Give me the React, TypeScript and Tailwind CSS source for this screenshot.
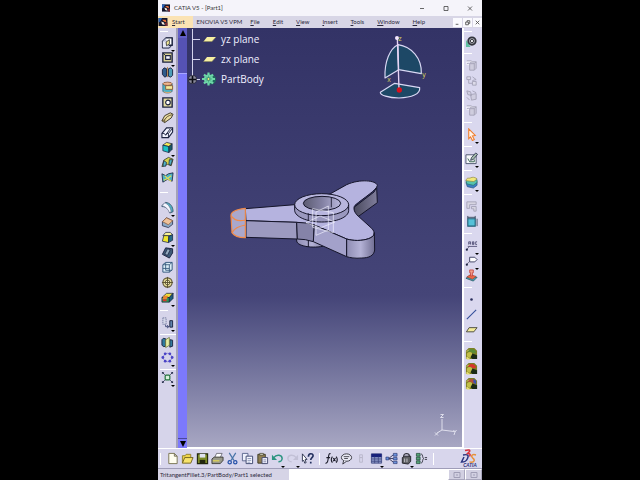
import type { ReactNode } from "react";
import clsx from "clsx";

type Tool = {
  name: string;
  art: ReactNode;
  menu?: boolean;
  disabled?: boolean;
};

const navy = "#1c2340";
const sand = "#f3eb9a";
const teal = "#4fb3c4";

/* ---------- icon drawings, all on a 14x14 grid ---------- */

const cube = (front: string, top: string, side: string) => (
  <>
    <path d="M2 4.500L6 1.500l6 1.500-3.500 3z" fill={top} stroke={navy} strokeWidth=".8" />
    <path d="M2 4.500L8.500 6v6.500L2 10.500z" fill={front} stroke={navy} strokeWidth=".8" />
    <path d="M8.500 6L12 3v6l-3.500 3.500z" fill={side} stroke={navy} strokeWidth=".8" />
  </>
);

const ghost = (
  <>
    <path d="M2 3h7M2 3v3h6" stroke="#fff" fill="none" />
    <path d="M5 5l2-2h5v7l-2 2H5z" fill="#cfcdde" stroke="#a5a3b8" />
    <path d="M5 5h5v7M10 5l2-2M2 2h5M2 5h2" stroke="#a5a3b8" fill="none" />
  </>
);

const sphere = (accent: string) => (
  <>
    <path d="M1 4l3-3h6l3 3v9H1z" fill="#7d7f24" />
    <path d="M3 5c1-4 8-4 9 1l-3 1-3-2z" fill={accent} />
    <circle cx="5" cy="8.500" r="3" fill="#c3bf48" />
    <path d="M8 7l5 2v4H8l-2-2z" fill="#1b2a17" />
    <path d="M2 11l3 2H2zM2 5l2-2" fill="#e6df74" stroke="#e6df74" />
  </>
);

const leftGroups: Tool[][] = [
  [
    {
      name: "Pad",
      menu: true,
      art: (
        <>
          <path d="M1.500 5.500L5 2h7v7.500L9 13H1.500z" fill="#b9bddb" stroke={navy} />
          <path d="M5 2h7v8H8" fill="#fff" stroke={navy} strokeWidth="1.500" />
          <path d="M2 6h6v6H2z" fill="#e8e9f6" />
          <path d="M5.500 6.500L9 4v4.500l-3 2z" fill={sand} stroke="#333" strokeWidth=".9" />
        </>
      ),
    },
    {
      name: "Pocket",
      menu: true,
      art: (
        <>
          <path d="M2 2h10v10H2z" fill="#d9d294" stroke={navy} strokeWidth="1.500" />
          <path d="M5 5h5v4H5z" fill="#f8f8ff" stroke={navy} strokeWidth="1.200" />
          <path d="M2 2l3 3" stroke={navy} />
        </>
      ),
    },
    {
      name: "Shaft",
      art: (
        <>
          <path d="M1.500 4l2-2 2.500 1v8l-2 1-2.500-3z" fill="#2f5c8c" stroke={navy} />
          <path d="M8 3l2.500-1 2 2v6l-2 2L8 11z" fill="#4c9db8" stroke={navy} />
          <path d="M7 1v11" stroke="#b1854e" />
        </>
      ),
    },
    {
      name: "Groove",
      art: (
        <>
          <path d="M2 3v8c1 2.500 9 2.500 10 0V3z" fill={teal} stroke="#2a6475" strokeWidth=".8" />
          <path d="M5 5h7.500v4H5z" fill={sand} stroke="#8a5c3a" />
          <ellipse cx="7" cy="3" rx="5" ry="1.800" fill="#eeb58c" stroke="#7a4a32" strokeWidth=".8" />
          <path d="M3 11.500c2 1.500 6 1.500 8 0" fill="none" stroke="#e9a869" strokeWidth="1.200" />
        </>
      ),
    },
    {
      name: "Hole",
      art: (
        <>
          <path d="M2 2h10v10H2z" fill="#e4dda2" stroke={navy} strokeWidth="1.500" />
          <circle cx="7.500" cy="7" r="2.500" fill="#fff" stroke={navy} strokeWidth="1.200" />
        </>
      ),
    },
    {
      name: "Rib",
      art: (
        <>
          <path d="M1 10.500l3-5.500 6-3 3 1.500-2 4L4 12.500z" fill="#eadca0" stroke="#3a3524" />
          <path d="M4 9.500C6 6 8 5 12 4M1 10.500l3-1v3" fill="none" stroke="#5b4f30" />
        </>
      ),
    },
    {
      name: "Slot",
      art: (
        <>
          <path d="M1 8l5-6h6.500v4.500L8 12.500H1z" fill="#f2f4ff" stroke={navy} strokeWidth="1.200" />
          <path d="M1 8h2.500l1.500 2 1.500-2H8v4.500M8 8l4.500-5.500M5 9.500L10 3" fill="none" stroke={navy} />
        </>
      ),
    },
    { name: "Stiffener", menu: true, art: cube("#18c2c4", "#f4ea57", "#195b68") },
    {
      name: "Multi-sections solid",
      art: (
        <>
          <path d="M1 11.500l2-7L8 1.500l5 2-2 7-4-1.500z" fill="#d6d24b" stroke="#3c4424" strokeWidth=".9" />
          <path d="M3 5l3 2-1 4-3 0zM9 4l3.500 0-2 6-2-1z" fill={teal} stroke={navy} strokeWidth=".8" />
        </>
      ),
    },
    {
      name: "Removed multi-sections solid",
      art: (
        <>
          <path d="M1 3l4 2 3-2 5-1-1 9-5-2-5 3z" fill={teal} stroke={navy} strokeWidth=".9" />
          <path d="M4 5l3 3 4-3M3 10l4-2 4 3" fill="none" stroke="#e0dd55" strokeWidth="1.300" />
        </>
      ),
    },
  ],
  [
    {
      name: "Edge fillet",
      menu: true,
      art: (
        <>
          <path d="M1 5l4-3.500c5 .5 8 4.500 8 10L9.500 13C9 9 6 6 1 6z" fill={teal} stroke="#3c5970" />
          <path d="M1 5l3-3c3 1 6 4 7 9.500l-2 1C8 9 5 6 1 5z" fill="#f5f7ff" stroke="#5b6484" strokeWidth=".7" />
        </>
      ),
    },
    {
      name: "Chamfer",
      art: (
        <>
          <path d="M1.500 6L6 2l6.500 3v4L8 12.500l-6.500-2z" fill="#8ba9c6" stroke={navy} strokeWidth=".8" />
          <path d="M1.500 6L6 2l6.500 3L8 9.500z" fill="#efc29a" stroke="#8c5b36" strokeWidth=".8" />
        </>
      ),
    },
    {
      name: "Draft angle",
      menu: true,
      art: (
        <>
          <path d="M2 5l3-3.500 5 0 2.500 2.500-4 1.500z" fill="#f6f194" stroke={navy} strokeWidth=".8" />
          <path d="M3 5h5.500l-.5 7.500-6.500-1.500z" fill="#eee52d" stroke={navy} strokeWidth=".8" />
          <path d="M8.500 5.500l4-1.500v6L8 12.500z" fill="#246b86" stroke={navy} strokeWidth=".8" />
        </>
      ),
    },
    {
      name: "Shell",
      art: (
        <>
          <path d="M1.500 9l3.500-7 7.500 1v4.500L9 13z" fill="#3e5b79" stroke={navy} />
          <path d="M4 9l3-6 3 1-3 6z" fill="#93abc0" stroke={navy} strokeWidth=".8" />
        </>
      ),
    },
    {
      name: "Thickness",
      art: (
        <>
          <path d="M2 4l3-2.500h7v8L9 12H2z" fill="#d9ecf6" stroke="#31557a" />
          <path d="M2 4h7v8M9 4l3-2.500M5 2v8h7M2 8h7" fill="none" stroke="#31557a" strokeWidth=".9" />
        </>
      ),
    },
    {
      name: "Thread",
      art: (
        <>
          <circle cx="7" cy="7" r="5" fill="#e0d795" stroke="#5a5230" strokeWidth="1.200" />
          <circle cx="7" cy="7" r="2.500" fill="#f2ebb8" stroke="#5a5230" strokeWidth=".9" />
          <path d="M7 1v12M1 7h12" stroke="#5a5230" />
        </>
      ),
    },
    {
      name: "Remove face",
      menu: true,
      art: (
        <>
          <path d="M1 7l5-4.500h7L9 7z" fill="#efe13a" stroke={navy} strokeWidth=".8" />
          <path d="M1 7h8v5H1z" fill="#2e9a58" stroke={navy} strokeWidth=".8" />
          <path d="M9 7l4-4.500V8l-4 4z" fill="#1c5e7c" stroke={navy} strokeWidth=".8" />
          <path d="M3 5h5L6 9H1.500z" fill="#e8862c" />
          <path d="M2 9h4v2H2z" fill="#d9362c" />
        </>
      ),
    },
  ],
  [
    {
      name: "Translation",
      menu: true,
      art: (
        <>
          <path d="M2 2h3.500v7H2z" fill="#d3d6e8" stroke="#7a80a4" strokeDasharray="1.500 .7" />
          <path d="M9.500 5h3v7h-3z" fill="#5f83ae" stroke={navy} />
          <path d="M5 9.500v2h3M6.500 10l2 1.500L6.500 13" fill="none" stroke="#3f4878" />
        </>
      ),
    },
  ],
  [
    {
      name: "Mirror",
      art: (
        <>
          <path d="M1 4l1.500-1.500L5 3v8l-2 .5L1 10zM9.500 4l3 .5V11l-3 1z" fill="#2f7a9c" stroke={navy} />
          <path d="M5 4l4-2.500V10l-4 2.500z" fill="#e6eda2" stroke="#687339" strokeWidth=".8" />
        </>
      ),
    },
    {
      name: "Rectangular pattern",
      menu: true,
      art: (
        <>
          <circle cx="7" cy="7" r="4.500" stroke="#6c66cc" strokeWidth=".7" />
          <g fill="#4a43c6">
            <circle cx="4.500" cy="3" r="1.500" />
            <circle cx="9.500" cy="3" r="1.500" />
            <circle cx="2" cy="7" r="1.500" />
            <circle cx="12" cy="7" r="1.500" />
            <circle cx="4.500" cy="11" r="1.500" />
            <circle cx="9.500" cy="11" r="1.500" />
          </g>
        </>
      ),
    },
  ],
  [
    {
      name: "Scaling",
      menu: true,
      art: (
        <>
          <path d="M2 2l2 2M12 2l-2 2M2 12l2-2M12 12l-2-2" stroke="#2c3350" />
          <path d="M1 1h2.500L1 3.500zM13 1v2.500L10.500 1zM1 13v-2.500L3.500 13zM13 13h-2.500l2.500-2.500z" fill="#2c3350" />
          <rect x="4.500" y="4.500" width="5" height="5" rx="1" fill="#d8f1dc" stroke="#24733d" strokeWidth="1.300" />
        </>
      ),
    },
  ],
];

const rightGroups: Tool[][] = [
  [
    {
      name: "Part Design",
      art: (
        <>
          <path d="M1 5l5 8-5 0z" fill="#5fbf9f" />
          <circle cx="7.500" cy="6.500" r="4" fill="#b9bac4" stroke="#33353d" strokeWidth="2" />
          <circle cx="7.500" cy="6.500" r="1.800" fill="#e8e8ee" stroke="#2b2d33" />
        </>
      ),
    },
  ],
  [
    { name: "Copy view", disabled: true, art: ghost },
    {
      name: "Link view",
      disabled: true,
      art: (
        <>
          <path d="M2 3h4v3H2zM8 8h4v4H8z" fill="#dddbe9" stroke="#a5a3b8" />
          <path d="M4 6v4h4M8 3l4 3-4 1" fill="none" stroke="#a5a3b8" />
        </>
      ),
    },
    {
      name: "Cut view",
      disabled: true,
      art: (
        <>
          <path d="M2 2l4 1 1 4-4-1zM6 6l6-1v6l-5 1z" fill="#cfcddf" stroke="#a5a3b8" />
          <path d="M2 9l3 3M8 2l4 2" stroke="#a5a3b8" />
        </>
      ),
    },
    { name: "Paste view", disabled: true, art: ghost },
  ],
  [
    {
      name: "Select",
      menu: true,
      art: (
        <path d="M4 1l7 7-3 .5 2 4-2 1-2-4-2 2z" fill="#fff3e9" stroke="#f08030" strokeWidth="1.200" />
      ),
    },
  ],
  [
    {
      name: "Sketch",
      menu: true,
      art: (
        <>
          <path d="M1 3h11v9.500H1z" fill="#f6f7fb" stroke="#4c556e" />
          <path d="M6 9l1-3 4.500-5 2 1.500L9 8z" fill="#a4bcab" stroke={navy} strokeWidth=".8" />
          <path d="M3 7l2 3.500 5 0V8" fill="none" stroke="#31614a" />
        </>
      ),
    },
  ],
  [
    {
      name: "Sketcher with positioning",
      menu: true,
      art: (
        <>
          <path d="M1 7l1.500 4.500L9 13l4-3V6z" fill="#3d7fc4" stroke="#24507a" strokeWidth=".7" />
          <path d="M1 5l1 3.500L9 10l4-3V4z" fill="#56c3ae" stroke="#276e66" strokeWidth=".7" />
          <path d="M1 5c1-4 3-2 5-3s4-1 7 1c-1 1-3 3-4 3z" fill="#f1e87a" stroke="#8c8440" strokeWidth=".7" />
        </>
      ),
    },
  ],
  [
    {
      name: "Catalog",
      disabled: true,
      art: <path d="M2 2h10v3H5v4H2zM7 7h5v5H9.500V9.500H7z" fill="#d7d5e2" stroke="#a5a3b8" />,
    },
    {
      name: "Measure",
      art: (
        <>
          <path d="M3 4h8v8H3z" fill="#55c1d8" stroke="#1f5d74" strokeWidth="1.200" />
          <path d="M3 1v3M11 1v3M3 2.500h8M13 4v8" stroke="#2b3e52" strokeWidth=".9" />
        </>
      ),
    },
  ],
  [
    {
      name: "Text with leader",
      menu: true,
      art: (
        <>
          <path d="M4 6V3h2v3M4 4.500h2M8 6V3h1.500v3H8M8 4.500h2M13 3h-1.500v3H13M3 8h10" fill="none" stroke="#4e4c74" strokeWidth=".9" />
          <path d="M5 8l-3 3" stroke="#5a5872" strokeWidth=".8" />
          <circle cx="2" cy="11.500" r="1.200" fill={navy} />
        </>
      ),
    },
    {
      name: "Flag note",
      menu: true,
      art: (
        <>
          <path d="M5 3.500h5.500L13 6l-2.500 2.500H5z" fill="#fff" stroke="#3a3d60" />
          <path d="M5 8l-3 3" stroke="#5a5872" strokeWidth=".8" />
          <circle cx="2" cy="11.500" r="1.200" fill={navy} />
        </>
      ),
    },
    {
      name: "Apply material",
      art: (
        <>
          <path d="M1 10l4-3 8 2-4 4z" fill="#3fa3b5" stroke="#24525f" strokeWidth=".8" />
          <path d="M2 8.500l4-2.500 6 2-4 3z" fill="#ea6a4a" stroke="#9c3b2c" strokeWidth=".6" />
          <path d="M5 1h4v3H8v3.500H6V4H5z" fill="#f2a08c" stroke="#c43a34" strokeWidth=".8" />
        </>
      ),
    },
  ],
  [
    { name: "Point", art: <circle cx="7" cy="7" r="1.400" fill="#2b2f5c" /> },
    { name: "Line", art: <path d="M2 12L12 2" stroke="#34509a" strokeWidth="1.200" /> },
    {
      name: "Plane",
      art: <path d="M1.500 9.500L4.500 5H13l-3.500 4.500z" fill={sand} stroke="#4a4a3a" />,
    },
  ],
  [
    { name: "Assemble", art: sphere("#5c8c34") },
    { name: "Add", art: sphere("#d8352c") },
    {
      name: "Remove",
      art: (
        <>
          {sphere("#b5503a")}
          <path d="M9 2l3 2v4L9 6z" fill="#3c52b0" />
        </>
      ),
    },
  ],
];

const fileTools: Tool[] = [
  {
    name: "New",
    art: <path d="M3 1.500h6l3 3v8H3zM9 1.500v3h3" fill="#fffef0" stroke="#77724f" />,
  },
  {
    name: "Open",
    art: (
      <>
        <path d="M1.500 12V4h3l1-1.500h5V6" fill="#f0d64a" stroke="#8f7f2c" />
        <path d="M1.500 12L4 6h9l-2.500 6z" fill="#f7e36b" stroke="#6f6120" />
      </>
    ),
  },
  {
    name: "Save",
    art: (
      <>
        <path d="M1.500 2h11v10.500h-11z" fill="#7b8a28" stroke="#22260e" strokeWidth="1.200" />
        <path d="M4 2h6v4H4z" fill="#dfe2f0" />
        <path d="M4 8.500h6v4H4z" fill="#22260e" />
      </>
    ),
  },
  {
    name: "Print",
    art: (
      <>
        <path d="M4 6l2-4.500h6L10 6z" fill="#fff" stroke="#55555f" strokeWidth=".8" />
        <path d="M1 7.500L3.500 5.500H13V9l-3 3.500H1z" fill="#9a9a8c" stroke="#33332c" strokeWidth=".9" />
        <path d="M2 9.500h7" stroke="#e4d850" strokeWidth="1.300" />
      </>
    ),
  },
  {
    name: "Cut",
    art: (
      <>
        <path d="M3.500 1l5 8M10.500 1l-5 8" stroke="#4a76a8" strokeWidth="1.300" />
        <circle cx="4" cy="11" r="1.800" fill="none" stroke="#2450a8" strokeWidth="1.300" />
        <circle cx="10" cy="11" r="1.800" fill="none" stroke="#2450a8" strokeWidth="1.300" />
      </>
    ),
  },
  {
    name: "Copy",
    art: (
      <>
        <path d="M1.500 1.500h6v8h-6z" fill="#eef0fb" stroke="#5a648c" />
        <path d="M5.500 4.500h7v8h-7z" fill="#f7f8ff" stroke="#3c466e" />
        <path d="M7 7h4M7 9h4M7 11h3" stroke="#7480a8" strokeWidth=".8" />
      </>
    ),
  },
  {
    name: "Paste",
    art: (
      <>
        <path d="M2 2.500h8V12H2z" fill="#8f7e52" stroke="#3d3823" />
        <path d="M4 1.500h4v2H4z" fill="#d8d5c6" stroke="#3d3823" strokeWidth=".7" />
        <path d="M6.500 6h6v6.500h-6z" fill="#f1f2ff" stroke="#434a6e" />
        <path d="M8 8.500h3M8 10.500h3" stroke="#6a6f90" strokeWidth=".8" />
      </>
    ),
  },
  {
    name: "Undo",
    menu: true,
    art: (
      <>
        <path d="M3 6c3-4 9-3 9 1 0 2-2 3.500-4 3.500" fill="none" stroke="#2c9480" strokeWidth="1.600" />
        <path d="M1 3v5.500h5.500z" fill="#2c9480" />
      </>
    ),
  },
  {
    name: "Redo",
    menu: true,
    disabled: true,
    art: (
      <>
        <path d="M11 6C8 2 2 3 2 7c0 2 2 3.500 4 3.500" fill="none" stroke="#c2c0d6" strokeWidth="1.500" />
        <path d="M13 3v5.500H7.500z" fill="#c2c0d6" />
      </>
    ),
  },
  {
    name: "What's this?",
    art: (
      <>
        <path d="M1.500 2l5 6H4.500l1 3.500-1.500.5L3 9 1.500 10z" fill="#fff" stroke={navy} strokeWidth=".9" />
        <path d="M8 5c0-4 5-4 5-1 0 2-2.500 2-2.500 4.500M10.500 10.500v2" fill="none" stroke="#23305e" strokeWidth="1.800" />
      </>
    ),
  },
];

const knowledgeTools: Tool[] = [
  {
    name: "Formula",
    art: (
      <g fill="none" stroke="#1d1d2b" strokeWidth="1.200">
        <path d="M6 2C4 1 4 4 3.500 7S2.500 12.500.5 12M1.500 6h4" />
        <path d="M8 5c-1.500 2-1.500 4.500 0 6.500M12 5c1.500 2 1.500 4.500 0 6.500M8.800 6.500l2.500 3.500M11.300 6.500L8.800 10" />
      </g>
    ),
  },
  {
    name: "Comment",
    art: (
      <>
        <ellipse cx="7" cy="6" rx="5.500" ry="4" fill="#e9e9f4" stroke="#34343f" />
        <path d="M4 9l-1 4 4-3" fill="#e9e9f4" stroke="#34343f" />
        <path d="M4 5h6M4.500 7h4" stroke="#34343f" strokeWidth=".9" />
      </>
    ),
  },
  {
    name: "Lock",
    disabled: true,
    art: <path d="M5 3h3v3H5zM5 6h3v5H5z" fill="none" stroke="#b9b7ca" />,
  },
  {
    name: "Design table",
    menu: true,
    art: (
      <>
        <path d="M1.500 2h11v10h-11z" fill="#8a97c6" stroke="#4a5288" />
        <path d="M1.500 2h11v3.500h-11z" fill="#16207a" />
        <path d="M1.500 7.500h11M1.500 10h11M5 5v7M9 5v7" stroke="#3c447e" strokeWidth=".8" />
      </>
    ),
  },
  {
    name: "Relations",
    art: (
      <>
        <path d="M4 7l5-4M4 7h5M4 7l5 4" stroke="#3a3d60" />
        <path d="M1 5.500h3v3H1zM9 1.500h4v3H9zM9 6h4v2.500H9zM9 10h4v2.500H9z" fill="#6c93dc" stroke="#26336e" strokeWidth=".7" />
      </>
    ),
  },
  {
    name: "Parameters lock",
    menu: true,
    art: (
      <>
        <path d="M4 6V4c0-3 6-3 6 0v2" fill="none" stroke="#30303a" strokeWidth="1.300" />
        <path d="M2.500 6L5 4.500h6.500V10l-2.500 3-6.500-1z" fill="#5d5e62" stroke="#22222a" />
        <path d="M5 7v4M7.500 7v4" stroke="#c9c9d0" />
      </>
    ),
  },
  {
    name: "Equivalent dimensions",
    art: (
      <>
        <path d="M1.500 1.500h4v3h-4zM1.500 5.500h4v3h-4zM1.500 9.500h4v3h-4z" fill="#56a578" stroke="#234a39" strokeWidth=".8" />
        <path d="M6.500 2c2.500 0 1 5 3 5-2 0-.5 5-3 5M10.500 6H13M10.500 8H13" fill="none" stroke="#3b3b4a" />
      </>
    ),
  },
];

const menus = ["File", "Edit", "View", "Insert", "Tools", "Window", "Help"];

/* ---------- small parts ---------- */

const ToolButton = ({ tool }: { tool: Tool }) => (
  <button
    type="button"
    aria-label={tool.name}
    disabled={tool.disabled}
    className="relative flex size-[15px] shrink-0 items-center justify-center"
  >
    <svg viewBox="0 0 14 14" className="size-[13px]" fill="none">
      {tool.art}
    </svg>
    {tool.menu && (
      <svg viewBox="0 0 4 2" className="absolute right-0 -bottom-0.5 h-0.5 w-1">
        <path d="M0 0h4L2 2z" fill="#000" />
      </svg>
    )}
  </button>
);

const Grip = () => <div className="h-px w-2 bg-white" />;

const AppIcon = ({ className }: { className?: string }) => (
  <svg viewBox="0 0 10 9" className={className}>
    <path d="M0 0h10v9H0z" fill="#14162c" />
    <path d="M0 0h4L2 4 0 5z" fill="#2a63b8" />
    <path d="M4 2l4 0 1 3-3-1z" fill="#e8713a" />
    <path d="M3 4l3 1 1 3-3-1z" fill="#f4e9dc" />
    <path d="M7 6l3-1v4H8z" fill="#7c2c34" />
  </svg>
);

const TitleBar = () => (
  <header className="flex h-4 shrink-0 items-center bg-[#f5f4fa] pl-1 text-[#333]">
    <AppIcon className="h-2 w-2" />
    <h1 className="ml-1 flex-1 text-[6px] leading-none">CATIA V5 - [Part1]</h1>
    <div className="flex gap-3 pr-1.5">
      {[
        { name: "Minimize", d: "M3 6.500h4" },
        { name: "Maximize", d: "M3 4.500h4v4H3z" },
        { name: "Close", d: "M3 4.500l4 4M7 4.500l-4 4" },
      ].map((b) => (
        <button key={b.name} type="button" aria-label={b.name} className="h-3 w-3">
          <svg viewBox="0 0 10 12" className="h-3 w-3" fill="none" stroke="#444" strokeWidth=".8">
            <path d={b.d} />
          </svg>
        </button>
      ))}
    </div>
  </header>
);

const MenuBar = () => (
  <nav className="flex h-3 shrink-0 items-center bg-[#d8d6e6] text-[6px] leading-none text-[#2c2a3c]">
    <button type="button" className="flex h-full items-center gap-1 bg-[#fbe3b4] pr-2">
      <AppIcon className="h-2 w-2.5" />
      <span>
        <u>S</u>tart
      </span>
    </button>
    <button type="button" className="mr-2 ml-1 whitespace-nowrap">
      ENOVIA V5 VPM
    </button>
    <div className="flex flex-1 gap-[13px]">
      {menus.map((m) => (
        <button key={m} type="button" className="whitespace-nowrap">
          <u>{m[0]}</u>
          {m.slice(1)}
        </button>
      ))}
    </div>
    <div className="flex gap-px">
      {[
        { name: "Minimize document", d: "M3 7h3" },
        { name: "Restore document", d: "M3 4.500h3v3H3zM4.500 4.500V3h3v3H6" },
        { name: "Close document", d: "M3 3l4 4M7 3L3 7" },
      ].map((b) => (
        <button key={b.name} type="button" aria-label={b.name} className="size-[9px] bg-[#fafafe]">
          <svg viewBox="0 0 10 10" className="size-[9px]" fill="none" stroke="#555">
            <path d={b.d} />
          </svg>
        </button>
      ))}
    </div>
  </nav>
);

const Scrollbar = () => (
  <div className="flex w-[9px] shrink-0 flex-col bg-[#5552b4]">
    <button type="button" aria-label="Scroll up" className="flex h-[10px] items-center justify-center bg-[#615ec8]">
      <svg viewBox="0 0 6 6" className="size-1.5">
        <path d="M3 0l3 6H0z" />
      </svg>
    </button>
    <div className="mt-[35px] flex-1 border-t border-[#a9a7ff] bg-[#7c79fc]" />
    <button
      type="button"
      aria-label="Scroll down"
      className="flex h-[10px] items-center justify-center border-t border-[#4a47a0] bg-[#7c79fc]"
    >
      <svg viewBox="0 0 6 6" className="size-1.5">
        <path d="M3 6L0 0h6z" />
      </svg>
    </button>
  </div>
);

const PlaneIcon = () => (
  <svg viewBox="0 0 14 14" className="size-3.5">
    <path d="M1.500 9.500L5 5h9l-4 4.500z" fill="#f6efa2" />
    <path d="M1.500 9.500H10L14 5" fill="none" stroke="#8d8a5c" strokeWidth=".6" />
  </svg>
);

const BodyIcon = () => (
  <svg viewBox="0 0 14 14" className="size-3.5">
    <circle cx="9" cy="7.500" r="5" fill="#1e6a5c" />
    <g stroke="#6fd8a8" strokeWidth="2.200">
      <path d="M6.500 .5v13M0 7h13M2 2.500l9 9M11 2.500l-9 9" />
    </g>
    <circle cx="6.500" cy="7" r="4.600" fill="#6fd8a8" />
    <path d="M6.500 3.500v7M3 7h7M4 4.500l5 5M9 4.500l-5 5" stroke="#34907a" strokeWidth=".6" />
    <circle cx="6.500" cy="7" r="1.500" fill="#e6ee7c" stroke="#2c8068" strokeWidth=".8" />
  </svg>
);

const SpecTree = () => (
  <ul className="relative pt-px font-['Open_Sans',sans-serif] text-[10px] leading-none text-[#f0f0ff]">
    {["yz plane", "zx plane", "PartBody"].map((label) => {
      const body = label === "PartBody";
      return (
        <li key={label} className="flex h-5 items-center pl-[5px]">
          <div className="relative h-5 w-2.5 shrink-0">
            <div className={clsx("w-px bg-[#d4d4ec]", body ? "h-2.5" : "h-5")} />
            <div className="absolute top-2.5 left-0 h-px w-2 bg-[#d4d4ec]" />
            {body && (
              <svg viewBox="0 0 10 10" className="absolute top-1.5 -left-1 size-[9px]">
                <circle cx="5" cy="5" r="4.500" fill="#8a8a9c" stroke="#23232f" strokeWidth=".8" />
                <path d="M5 1v8M1 5h8" stroke="#0c0c14" strokeWidth="1.800" />
              </svg>
            )}
          </div>
          {body ? <BodyIcon /> : <PlaneIcon />}
          <span className="ml-[5px]">{label}</span>
        </li>
      );
    })}
  </ul>
);

const Compass = () => (
  <svg viewBox="171 99 150 201" className="absolute top-[5px] right-[35px] h-[67px] w-[50px]">
    <g fill="#1d4866" stroke="#dad8f4" strokeWidth="3.500" strokeLinejoin="round">
      <path d="M234 134C210 145 193 185 195 234L236 209z" />
      <path d="M234 134C275 140 306 175 304 221L236 209z" />
      <path d="M224 250L299 263C302 282 275 293 237 294 205 294 180 285 181 277z" />
    </g>
    <path d="M232 114L237 268" stroke="#e8d4f4" strokeWidth="4" />
    <circle cx="231" cy="114" r="6" fill="#f4e8ff" />
    <circle cx="238" cy="270" r="8" fill="#d8101c" />
    <g fill="#d0cc5c" fontFamily="Liberation Sans" fontSize="21">
      <text x="235" y="122">z</text>
      <text x="202" y="246">x</text>
      <text x="307" y="231">y</text>
    </g>
  </svg>
);

const Part = () => (
  <svg viewBox="0 0 510 300" className="absolute top-[142px] left-[33px] h-[100px] w-[170px]">
    <defs>
      <linearGradient id="cap">
        <stop offset="0" stopColor="#8f8db4" />
        <stop offset=".5" stopColor="#b4b2d6" />
        <stop offset="1" stopColor="#706e92" />
      </linearGradient>
      <linearGradient id="bore">
        <stop offset="0" stopColor="#5c5c72" />
        <stop offset=".5" stopColor="#8280a2" />
        <stop offset="1" stopColor="#b9b7dc" />
      </linearGradient>
      <linearGradient id="notch">
        <stop offset="0" stopColor="#4a4a5e" />
        <stop offset="1" stopColor="#807e9c" />
      </linearGradient>
    </defs>
    <g stroke="#15152a" strokeWidth="3" strokeLinejoin="round">
      <path d="M230 195v18c2 18 60 24 92 12l-10-30z" fill="url(#cap)" />
      <path d="M265 205v26" fill="none" />
      <path d="M402 112L462 66 470 52 472 98 410 143 402 128z" fill="url(#notch)" />
      <path
        d="M76 116L225 104 330 72 380 44C420 26 468 31 472 46 471 60 430 84 405 106 399 113 402 124 410 134L455 175C468 188 463 200 446 206 425 213 400 213 380 207L283 165 230 157 78 152z"
        fill="#b5b3df"
      />
      <path d="M78 152L230 157 232 207 78 202z" fill="#9c9ac0" />
      <path d="M230 157Q260 157 283 165L280 215Q256 207 232 207z" fill="#8583a8" />
      <path d="M283 165L380 207V260L280 215z" fill="#a3a1ca" />
      <path d="M380 207C400 213 425 213 446 206 458 201 463 196 463 188L464 240C462 258 445 264 425 264 405 266 390 263 380 260z" fill="url(#cap)" />
      <path d="M224 104v18c2 18 36 34 81 34s80-14 81-34v-18z" fill="#9a98be" />
      <ellipse cx="305" cy="104" rx="81" ry="33" fill="#b8b6de" />
      <ellipse cx="306" cy="100" rx="56" ry="21" fill="url(#bore)" />
      <path d="M265 130v24M334 84v28" fill="none" strokeWidth="2.500" />
    </g>
    <g fill="none" stroke="#f2f2ff" strokeWidth="2">
      <path d="M278 116L340 128V188L278 172z" />
      <path d="M288 126L325 108V180L288 196z" />
      <path d="M258 158L300 138 345 156 300 174z" />
    </g>
    <g fill="none" stroke="#f08a4a" strokeWidth="3.500" strokeLinejoin="round">
      <path d="M76 115C50 118 32 126 33 137L36 188C42 198 55 203 76 203z" fill="#aaa8cc" />
      <path d="M33 137C42 152 60 154 77 150M36 188C42 176 58 168 77 165" />
    </g>
  </svg>
);

const AxisTriad = () => (
  <svg
    viewBox="0 0 24 24"
    className="absolute right-1 bottom-2.5 size-6"
    fill="none"
    stroke="#e6e6f2"
    strokeWidth=".9"
  >
    <path d="M8 17V6M8 17l-5 3M8 17l12 1.500" />
    <path d="M6.500 1.500h3l-3 3h3M1 19.500l3 3M4 19.500l-3 3M19.500 17l1.500 2 1.500-2M21 19l-1 3" />
  </svg>
);

const Viewport = () => (
  <main className="relative min-w-0 flex-1 overflow-hidden border-b border-white bg-linear-to-b from-[#333366] from-0% via-[#454578] via-64% to-[#a8a7c3]">
    <SpecTree />
    <Compass />
    <Part />
    <AxisTriad />
  </main>
);

const CatiaLogo = () => (
  <div className="flex w-6 shrink-0 flex-col items-center pb-px">
    <svg viewBox="0 0 22 14" className="h-3.5 w-[22px]" fill="none" strokeWidth="1.500">
      <path d="M4 6c5-1 6 0 4.500 3.500S5 13 2.500 13L5 8" stroke="#2a3580" />
      <path d="M6 1.500c4-1 5.500-.5 4.500 1L8.500 4.500c3 0 3 1 2 3" stroke="#d8323a" />
      <path d="M17 6c-3-1-5 0-4 2s3 2 2 4-3 1-4.500 1" stroke="#e89038" />
    </svg>
    <span className="text-[5px] leading-[4px] font-bold text-[#2a2f78] italic">CATIA</span>
  </div>
);

const App = () => {
  return (
    <div className="flex h-screen justify-center bg-black font-[Lato,sans-serif]">
      <div className="flex aspect-[27/40] h-full flex-col overflow-hidden bg-[#d6d4ec]">
        <TitleBar />
        <MenuBar />
        <div className="flex min-h-0 flex-1">
          <aside className="flex w-5 shrink-0 flex-col border-r-2 border-[#a3a1b8] bg-[#d6d4ea] pt-[3px] pl-0.5">
            <Grip />
            <div className="h-[3px]" />
            {leftGroups.map((group, i) => (
              <div key={i} className={clsx("flex flex-col", i > 2 && "mt-1 border-t border-white")}>
                {(i === 1 || i === 2) && (
                  <div className={clsx("flex items-center", i === 1 ? "h-[15px]" : "h-2.5")}>
                    <Grip />
                  </div>
                )}
                {group.map((tool) => (
                  <ToolButton key={tool.name} tool={tool} />
                ))}
              </div>
            ))}
          </aside>
          <Scrollbar />
          <Viewport />
          <aside className="flex w-5 shrink-0 flex-col border-l-2 border-white bg-[#dad8ef]">
            {rightGroups.map((group, i) => (
              <div key={i} className="flex flex-col">
                <div className={clsx("flex items-center", i === 0 ? "h-1.5" : "h-[9px]")}>
                  <Grip />
                </div>
                {group.map((tool) => (
                  <ToolButton key={tool.name} tool={tool} />
                ))}
              </div>
            ))}
          </aside>
        </div>
        <div className="flex h-5 shrink-0 items-center border-t border-white bg-[#d8d6ec] pl-0.5">
          <div className="mr-1 h-3 w-px bg-white" />
          {fileTools.map((tool) => (
            <ToolButton key={tool.name} tool={tool} />
          ))}
          <div className="mx-1 h-3 w-px bg-white" />
          {knowledgeTools.map((tool) => (
            <ToolButton key={tool.name} tool={tool} />
          ))}
          <div className="ml-1 h-3 w-px bg-white" />
          <div className="flex-1" />
          <CatiaLogo />
        </div>
        <footer className="flex h-3 shrink-0 items-center border-t border-[#9f9db8] bg-[#d6d4e6] text-[6px] leading-none text-[#2c2a3c]">
          <label htmlFor="command" className="w-[131px] pl-0.5 whitespace-nowrap">
            TritangentFillet.3/PartBody/Part1 selected
          </label>
          <input id="command" type="text" className="h-full min-w-0 flex-1 bg-white px-1 outline-none" />
          {["Power input", "Command list"].map((name) => (
            <button
              key={name}
              type="button"
              aria-label={name}
              className="flex h-full w-[17px] items-center justify-center border border-t-white border-r-[#a9a7bd] border-b-[#a9a7bd] border-l-white bg-[#d2d0e2]"
            >
              <svg viewBox="0 0 8 8" className="size-2" fill="none" stroke="#a09eb6">
                <path d="M1 1.500h6v5H1zM3 4h2" />
              </svg>
            </button>
          ))}
        </footer>
      </div>
    </div>
  );
};

export default App;
